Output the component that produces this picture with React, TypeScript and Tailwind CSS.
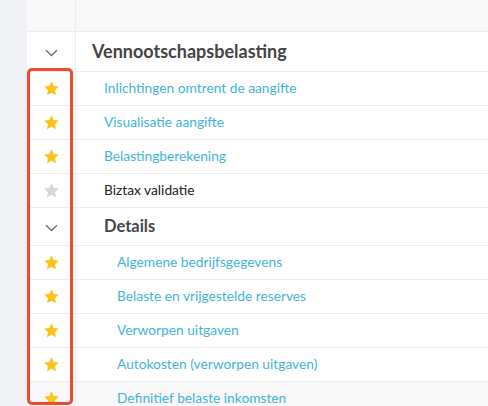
import React from "react";

const Star = ({ active }: { active: boolean }) => (
  <svg width="17" height="17" viewBox="0 0 24 24" aria-hidden>
    <path
      d="M12 1.8l3.1 6.6 7.2.9-5.3 5 1.4 7.1L12 17.9l-6.4 3.5 1.4-7.1-5.3-5 7.2-.9z"
      fill={active ? "#fcc419" : "#d6d6d6"}
    />
  </svg>
);

const Chevron = () => (
  <svg width="13" height="8" viewBox="0 0 13 8" aria-hidden>
    <path d="M1 1.2l5.5 5.3 5.5-5.3" fill="none" stroke="#6f6f6f" strokeWidth="1.4" />
  </svg>
);

type Row =
  | { kind: "section"; label: string; level: 0 | 1 }
  | { kind: "item"; label: string; level: 0 | 1; active: boolean; link: boolean; hover?: boolean };

const rows: Row[] = [
  { kind: "section", label: "Vennootschapsbelasting", level: 0 },
  { kind: "item", label: "Inlichtingen omtrent de aangifte", level: 0, active: true, link: true },
  { kind: "item", label: "Visualisatie aangifte", level: 0, active: true, link: true },
  { kind: "item", label: "Belastingberekening", level: 0, active: true, link: true },
  { kind: "item", label: "Biztax validatie", level: 0, active: false, link: false },
  { kind: "section", label: "Details", level: 1 },
  { kind: "item", label: "Algemene bedrijfsgegevens", level: 1, active: true, link: true },
  { kind: "item", label: "Belaste en vrijgestelde reserves", level: 1, active: true, link: true },
  { kind: "item", label: "Verworpen uitgaven", level: 1, active: true, link: true },
  { kind: "item", label: "Autokosten (verworpen uitgaven)", level: 1, active: true, link: true },
  { kind: "item", label: "Definitief belaste inkomsten", level: 1, active: true, link: true, hover: true },
];

export default function App() {
  return (
    <div
      className="flex w-[488px] h-[406px] overflow-hidden bg-[#eff1f4]"
      style={{ fontFamily: "Lato, 'Open Sans', sans-serif" }}
    >
      <div className="w-[27px] shrink-0" />
      <div className="relative flex-1 bg-white flex flex-col">
        <div className="flex h-[32px] shrink-0 bg-[#f8f8f8] border-b border-[#ececec]">
          <div className="w-[49px] shrink-0 border-r border-[#ececec]" />
          <div className="flex-1" />
        </div>
        {rows.map((r, i) => {
          if (r.kind === "section") {
            return (
              <div
                key={i}
                className={`flex shrink-0 border-b border-[#ededed] ${r.level === 0 ? "h-[40px]" : "h-[38px]"}`}
              >
                <div className="w-[49px] shrink-0 border-r border-[#ededed] flex items-center justify-center pt-[2px]">
                  <Chevron />
                </div>
                <div
                  className={`flex-1 flex items-center font-bold text-[#454545] ${
                    r.level === 0 ? "pl-[16px] text-[18px]" : "pl-[28px] text-[16.5px]"
                  }`}
                >
                  {r.label}
                </div>
              </div>
            );
          }
          return (
            <div
              key={i}
              className={`flex h-[34px] shrink-0 border-b border-[#ededed] ${r.hover ? "bg-[#f8f8f8]" : ""}`}
            >
              <div className="w-[49px] shrink-0 border-r border-[#ededed] flex items-center justify-center">
                <Star active={r.active} />
              </div>
              <div
                className={`flex-1 flex items-center text-[13.75px] ${
                  r.level === 0 ? "pl-[28px]" : "pl-[41px]"
                } ${r.link ? "text-[#3fb5da]" : "text-[#222]"}`}
              >
                {r.label}
              </div>
            </div>
          );
        })}
        <div className="absolute left-0 top-[68px] w-[46px] h-[337px] border-[3px] border-[#ee4a2b] rounded-[5px] pointer-events-none" />
      </div>
    </div>
  );
}
